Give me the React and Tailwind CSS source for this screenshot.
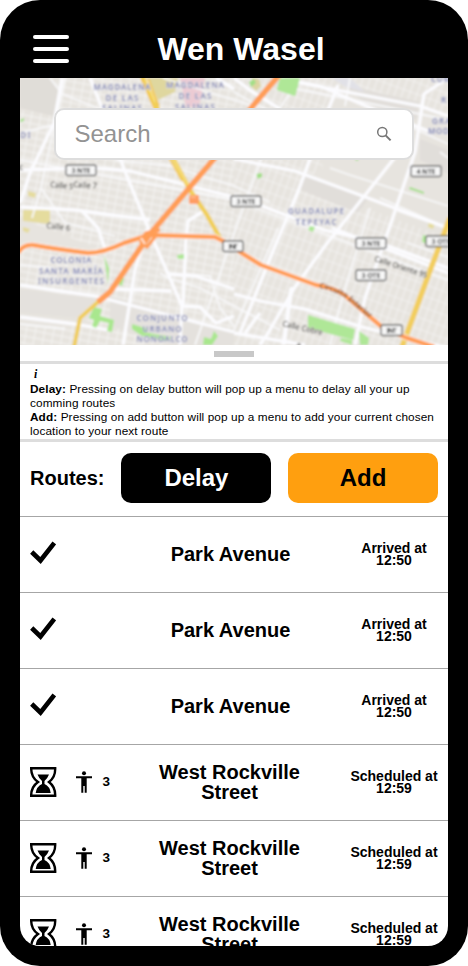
import React from "react";

const minorRoads = [
  "M0 82L214 122L428 202", "M0 55L42 45L100 60", "M30 0L42 16L80 31", "M96 82L150 88L214 108L250 124",
  "M45 0L38 31L21 110L12 140", "M21 110L45 145L95 158", "M0 187L34 190M0 246L45 251",
  "M135 29L200 50M143 0L214 22L238 30", "M280 0L260 30L216 150L175 267", "M214 14L228 22L260 38",
  "M330 0L325 28M270 10L324 20L428 42", "M345 28L428 66", "M420 74L428 80",
  "M165 196L190 198L200 230L214 248", "M310 267L325 210L350 130M270 210L262 267",
  "M140 195L148 200L180 210L260 252", "M214 252L227 222L258 150",
  "M310 90L330 97L428 128", "M388 165L428 179M360 120L428 150",
];

const roads = [
  "M70 0L84 35L104 91L129 152L162 228L160 267",
  "M0 92L74 90L110 93L214 119",
  "M42 0L34 45L10 95L0 125",
  "M62 133L78 150L86 174",
  "M0 129L55 132L130 142",
  "M0 207L75 218L214 254",
  "M0 239L55 246L88 252",
  "M127 151L115 192L103 267",
  "M185 132L168 143L166 160L163 227",
  "M95 211L151 213M147 196L175 198L214 211",
  "M160 228L180 229L196 245L214 238",
  "M214 0L231 13L260 31M196 0L214 11",
  "M258 0L300 8L346 28L408 53",
  "M270 3L400 28L428 38",
  "M318 7L303 45L279 111L256 166L220 255",
  "M428 0L404 16L395 74L373 139L345 220L335 267",
  "M376 78L342 121L305 168L275 209L248 255L240 267",
  "M214 81L275 93L340 117L428 150",
  "M214 117L304 152L360 165L428 190",
  "M378 132L428 150M312 150L428 195",
  "M214 216L240 223L285 231L342 249L428 270",
  "M272 209L264 267M240 235L225 255M214 255L285 267",
];

const labels = [
  ["MAGDALENA", 102, 12, 57], ["DE LAS", 102, 23, 33], ["SALINAS", 102, 33, 40],
  ["MAGDALENA", 175, 10, 58], ["DE LAS", 175, 21, 33], ["SALINAS", 175, 32, 40],
  ["ADI", 2, 60, 17], ["CUM", 421, 4, 20], ["REY", 431, 25, 20], ["GRAN", 425, 46, 26], ["MODE", 421, 56, 26],
  ["COLONIA", 51, 185, 41], ["SANTA MARÍA", 51, 196, 64], ["INSURGENTES", 51, 206, 66],
  ["GUADALUPE", 296, 136, 56], ["TEPEYAC", 296, 147, 41],
  ["CONJUNTO", 142, 243, 51], ["URBANO", 142, 254, 39], ["NONOALCO", 142, 264, 51],
];

const shields = [
  ["3 NTE", 46, 87, 30], ["3 NTE", 211, 118, 30], ["4 NTE", 391, 88, 30], ["INT", 203, 163, 20],
  ["3 NTE", 336, 160, 30], ["3 OTE", 336, 192, 30], ["3 OTE", 406, 158, 30], ["INT", 361, 247, 21],
];

function CityMap() {
  return (
    <svg className="block h-full w-full" viewBox="0 0 428 267" aria-label="Map">
      <defs>
        <pattern id="blocksA" width="9" height="7" patternUnits="userSpaceOnUse" patternTransform="rotate(11)">
          <path d="M0 0H9M0 0V7" stroke="#f5f4f2" strokeWidth="1.9" />
        </pattern>
        <pattern id="blocksB" width="7" height="11" patternUnits="userSpaceOnUse" patternTransform="rotate(20)">
          <path d="M0 0H7M0 0V11" stroke="#f5f4f2" strokeWidth="1.7" />
        </pattern>
        <filter id="soft" x="0" y="0" width="1" height="1">
          <feGaussianBlur stdDeviation="0.8" />
        </filter>
      </defs>
      <rect width="428" height="267" fill="#e7e4df" />
      <g filter="url(#soft)">
        <rect x="-5" y="-5" width="438" height="277" fill="#e7e4df" />
        <path d="M0 35L35 5L45 0H214V267H0V248H62L80 225L0 207V170L90 175L0 140Z" fill="url(#blocksA)" />
        <path d="M214 0H428V38L350 16L320 10L303 48V90L279 105L340 128L428 160V267H214Z" fill="url(#blocksB)" />
        <path d="M0 0H29L42 14L33 38L0 30Z" fill="#e0ddd8" />
        <path d="M286 97L348 121L338 135L279 111ZM400 61L428 72V96L400 82ZM324 7L400 24L396 42L345 25Z" fill="#e1deda" />
        <path d="M90 218L214 254V267H150L90 248ZM0 211L78 220L55 240L0 235Z" fill="#e4e1dd" />
        <path d="M128 0H158L155 14L138 22Z" fill="#dfd79f" />
        <path d="M160 0H185L179 29H166Z" fill="#eccbd3" />
        <path d="M3 132H30V146L3 143ZM8 113L16 115L15 120L8 118ZM3 149L10 151L8 155L3 153ZM409 144L415 145L413 151L408 149Z" fill="#e5dc9e" />
        <path d="M312 0H330L345 14L326 9Z" fill="#e1e1e7" />
        <path d="M232 0L239 1L241 8L236 13L231 8Z" fill="#ddd5a2" />
        <path d="M260 0H280L275 18L257 12ZM229 4L234 1L236 5L231 9ZM236 96L242 95V99L238 101ZM390 109L404 114V116L389 111ZM0 42L4 40V43L0 44ZM334 80L339 81L337 83Z" fill="#a2df87" />
        <g fill="none" stroke="#f8f8f9" strokeWidth="1.8" strokeLinejoin="round">
          {minorRoads.map((d) => <path key={d} d={d} />)}
        </g>
        <g fill="none" stroke="#fcfcff" strokeWidth="3.3" strokeLinejoin="round">
          {roads.map((d) => <path key={d} d={d} />)}
        </g>
        <path d="M260 0H280L275 18L257 12ZM288 237L335 251L333 262L288 250ZM339 253L349 260L348 267H340ZM321 260L332 262V267L320 263ZM403 157L407 158V166L402 164ZM290 148L295 149L293 154L288 152ZM157 177L164 176V181L158 181Z" fill="#afe797" />
        <path d="M74 229L82 231L80 238L94 242L92 254L87 253L89 245L80 243L76 250L72 248L74 242L69 240ZM99 197L104 200L102 208L98 206ZM112 246L128 251L124 254L151 259L148 263L122 258L112 251ZM184 259L191 261L194 253L198 258L192 267H183ZM84 178L89 190L88 206L86 190Z" fill="#a9e78e" />
        <g fill="none" strokeLinejoin="round">
          <path d="M122 -3L138 32L154 82L170 112L187 137L200 160" stroke="#f1cf58" strokeWidth="4.5" />
          <path d="M125 0L135 24M152 78L168 107" stroke="#fff0a8" strokeWidth="0.8" />
          <path d="M121 0L134 30L150 82L162 103M128 0L139 28" stroke="#f5c43e" strokeWidth="1.5" />
          <path d="M79 223L60 240L54 269" stroke="#f0cd5b" strokeWidth="3.8" />
          <path d="M430 140L408 198L382 269" stroke="#f2ce5e" strokeWidth="5.5" />
          <path d="M-2 175Q3 166 13 167Q35 171 68 175Q83 175 104 165L129 157L195 159L207 165L220 174L241 187L296 207Q319 211 328 220L363 250L387 260L414 269" stroke="#fff" strokeWidth="6" />
          <path d="M-2 175Q3 166 13 167Q35 171 68 175Q83 175 104 165L129 157L195 159L207 165L220 174L241 187L296 207Q319 211 328 220L363 250L387 260L414 269" stroke="#ff9d56" strokeWidth="4.5" />
          <path d="M260 -4L232 29L193 82L130 156L90 214L78 224" stroke="#ff9d56" strokeWidth="5.7" />
          <path d="M120 163L126 155L140 152M120 163L127 169L138 155" stroke="#ff9d56" strokeWidth="3.4" />
          <path d="M121 160L125 166" stroke="#ffeadb" strokeWidth="1.8" />
        </g>
        <rect x="169" y="117" width="10" height="9" rx="1" fill="#ff9d63" />
        <path d="M170 119H176" stroke="#ffd0ae" />
        <g className="font-['Noto_Sans',sans-serif]" fontSize="8" fontWeight="600" textAnchor="middle" fill="#7c80ae" stroke="#efeff3" strokeWidth="0.8" paintOrder="stroke">
          {labels.map(([text, x, y, width]) => (
            <text key={`${x}-${y}`} x={x} y={y} textLength={width} lengthAdjust="spacing">{text}</text>
          ))}
        </g>
        <g className="font-['Noto_Sans',sans-serif]" fontSize="8" fontWeight="500" fill="#4d4c4a" stroke="#eeece8" strokeWidth="0.8" paintOrder="stroke">
          <text x="-10" y="92" textLength="13" lengthAdjust="spacingAndGlyphs">uac</text>
          <text x="30" y="109" textLength="23" lengthAdjust="spacingAndGlyphs" transform="rotate(6 30 109)">Calle 5</text>
          <text x="53" y="109" textLength="24" lengthAdjust="spacingAndGlyphs" transform="rotate(4 53 109)">Calle 7</text>
          <text x="26" y="150" textLength="24" lengthAdjust="spacingAndGlyphs" transform="rotate(7 26 150)">Calle 6</text>
          <text x="354" y="183" textLength="55" lengthAdjust="spacingAndGlyphs" transform="rotate(18 354 183)">Calle Oriente 95</text>
          <text x="262" y="248" textLength="41" lengthAdjust="spacingAndGlyphs" transform="rotate(13 262 248)">Calle Cobre</text>
          <text x="276" y="269" transform="rotate(10 276 269)">a</text>
          <path id="interior" d="M299 210Q319 214 329 223L355 245" fill="none" stroke="none" />
          <text stroke="none" fill="#6a5546"><textPath href="#interior" textLength="60">Circuito Interior</textPath></text>
        </g>
        <g className="font-['Noto_Sans',sans-serif]" fontSize="7" fontWeight="700" textAnchor="middle" fill="#333">
          {shields.map(([text, x, y, width]) => (
            <g key={`${x}-${y}`}>
              <rect x={x} y={y} width={width} height="10.5" rx="1.5" fill="#f8f8f8" stroke="#606060" strokeWidth="1.3" />
              <text x={x + width / 2} y={y + 7.8} textLength={width - 11}>{text}</text>
            </g>
          ))}
        </g>
      </g>
    </svg>
  );
}

function Check() {
  return (
    <svg className="h-[23px] w-[26px]" viewBox="0 0 26 23">
      <path d="M1.7 11L10.5 19.5L24.3 2" fill="none" stroke="#000" strokeWidth="4.6" />
    </svg>
  );
}

function Hourglass() {
  return (
    <svg className="h-[30px] w-[27px] shrink-0" viewBox="0 0 27 30">
      <path d="M1.2 1.2H25.2Q25.5 10 19 15Q25.5 20 25.2 28.8H1.2Q1 20 8 15Q1 10 1.2 1.2Z" fill="none" stroke="#000" strokeWidth="2.4" />
      <path d="M7.5 7.5H19Q17.5 11.5 14.5 14V17Q20 19.5 20.7 26H5.7Q6.5 19.5 12 17V14Q9 11.5 7.5 7.5Z" />
    </svg>
  );
}

function Person() {
  return (
    <svg className="h-[22px] w-[16px] shrink-0" viewBox="0 0 16 22">
      <circle cx="8" cy="2.2" r="2" />
      <path d="M0 5.3H16V7.3H10.7V21.8H8.7V15H7.3V21.8H5.3V7.3H0Z" />
    </svg>
  );
}

const stops = [
  { name: "Park Avenue", status: "Arrived at", time: "12:50", arrived: true },
  { name: "Park Avenue", status: "Arrived at", time: "12:50", arrived: true },
  { name: "Park Avenue", status: "Arrived at", time: "12:50", arrived: true },
  { name: "West Rockville Street", status: "Scheduled at", time: "12:59" },
  { name: "West Rockville Street", status: "Scheduled at", time: "12:59" },
  { name: "West Rockville Street", status: "Scheduled at", time: "12:59" },
];

function Stop({ stop }) {
  return (
    <li className="flex h-[76px] shrink-0 items-center border-b border-[#a6a6a6] px-2.5 pb-0.5 font-bold">
      <div className="flex w-[120px] items-center">
        {stop.arrived ? <div className="-mt-0.5"><Check /></div> : (
          <>
            <Hourglass />
            <div className="ml-[19px]"><Person /></div>
            <span className="ml-[10.5px] pt-px text-[13.5px] leading-4">3</span>
          </>
        )}
      </div>
      <div className={stop.arrived ? "w-[161px] text-center text-xl leading-5" : "w-[159px] text-center text-xl leading-5"}>{stop.name}</div>
      <div className="-mr-1 ml-auto w-[96px] text-center text-sm leading-3">
        {stop.status}<br />{stop.time}
      </div>
    </li>
  );
}

export default function App() {
  return (
    <div className="h-[966px] w-[468px] overflow-hidden bg-white font-['Liberation_Sans',Arial,sans-serif] text-black">
      <div className="flex h-full flex-col rounded-[40px] bg-black px-5 pb-5">
        <header className="grid h-[78px] shrink-0 grid-cols-[60px_1fr_46px] items-center pt-5">
          <button className="ml-[13px] flex w-9 flex-col gap-2" aria-label="Menu">
            <span className="h-1 w-full rounded-full bg-white" />
            <span className="h-1 w-full rounded-full bg-white" />
            <span className="h-1 w-full rounded-full bg-white" />
          </button>
          <h1 className="text-center text-[32px] leading-9 font-bold text-white">Wen Wasel</h1>
        </header>
        <main className="flex min-h-0 flex-1 flex-col overflow-hidden rounded-b-[20px] bg-white">
          <section className="relative h-[267px] shrink-0">
            <CityMap />
            <div className="absolute top-[30px] left-[34px] flex h-[52px] w-[360px] items-center justify-between rounded-[10px] border-2 border-[#ddd] bg-white pr-5 pl-[18.5px]">
              <span className="text-2xl text-[#939393]">Search</span>
              <svg className="h-4 w-4" viewBox="0 0 16 16" fill="none" stroke="#777">
                <circle cx="6.3" cy="6" r="4.6" strokeWidth="1.5" />
                <path d="M9.6 9.4L14.6 14.4" strokeWidth="2" />
              </svg>
            </div>
          </section>
          <div className="flex h-4 shrink-0 justify-center pt-1.5">
            <div className="h-1.5 w-10 bg-[#c8c8c8]" />
          </div>
          <section className="h-[81px] shrink-0 border-y-[3px] border-[#ddd] px-2.5 pt-[3px] text-[11.8px] leading-[14px] tracking-[0.1px]">
            <div className="pb-px pl-1 font-['Liberation_Serif',serif] font-bold italic">i</div>
            <p><b>Delay:</b> Pressing on delay button will pop up a menu to delay all your up comming routes</p>
            <p><b>Add:</b> Pressing on add button will pop up a menu to add your current chosen location to your next route</p>
          </section>
          <div className="flex h-[75px] shrink-0 items-center justify-between border-b border-[#a6a6a6] px-2.5 pb-0.5 font-bold">
            <h2 className="text-xl">Routes:</h2>
            <div className="flex gap-[16.6px] text-2xl">
              <button className="h-[50px] w-[150px] rounded-[10px] bg-black text-white">Delay</button>
              <button className="h-[50px] w-[150px] rounded-[10px] bg-[#ff9f0f]">Add</button>
            </div>
          </div>
          <ul className="min-h-0 flex-1 overflow-hidden">
            {stops.map((stop, index) => <Stop key={index} stop={stop} />)}
          </ul>
        </main>
      </div>
    </div>
  );
}
